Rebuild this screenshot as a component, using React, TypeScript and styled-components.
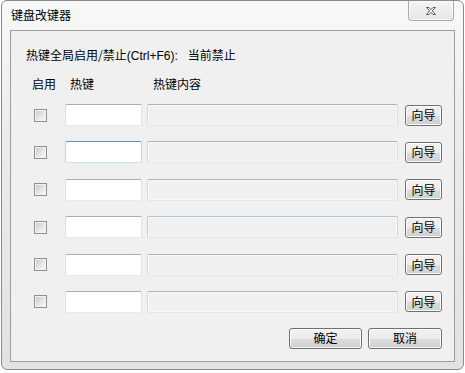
import React from "react";
import styled, { createGlobalStyle } from "styled-components";

const Global = createGlobalStyle`
  html, body { margin: 0; padding: 0; background: #ffffff; }
  body { font-family: "Liberation Sans", "Noto Sans CJK SC", sans-serif; font-size: 12px; color: #000; }
  * { box-sizing: border-box; }
`;

const Win = styled.div`
  margin: 0 0 0 1px;
  width: 463px;
  height: 370px;
  border: 1px solid #8a8a8a;
  border-radius: 6px;
  background: linear-gradient(to bottom, #f8f8f8 0%, #ebebeb 40%, #e2e2e2 100%);
  display: flex;
  flex-direction: column;
  overflow: hidden;
`;

const TitleBar = styled.div`
  height: 29px;
  display: flex;
  align-items: flex-start;
  padding-left: 9px;
`;

const Title = styled.div`
  font-family: "Noto Sans CJK SC", sans-serif;
  font-size: 12px;
  line-height: 16px;
  margin-top: 6px;
  color: #000;
`;

const CloseBtn = styled.div`
  margin-left: auto;
  margin-right: 9px;
  width: 46px;
  height: 20px;
  border: 1px solid #a9a9a9;
  border-top: none;
  border-radius: 0 0 4px 4px;
  background: linear-gradient(to bottom, #f4f4f4, #e6e6e6);
  box-shadow: inset 0 0 0 1px rgba(255,255,255,0.7);
  display: flex;
  align-items: center;
  justify-content: center;
  padding-top: 1px;
`;

const Client = styled.div`
  margin: 0 8px 0 8px;
  height: 332px;
  border: 1px solid #9c9c9c;
  background: #f0f0f0;
  display: flex;
  flex-direction: column;
  padding: 15px 12px 0 0;
`;

const Status = styled.div`
  font-family: "Noto Sans CJK SC", sans-serif;
  line-height: 18px;
  padding-left: 15px;
  display: flex;
`;

const StatusValue = styled.span`
  margin-left: 10px;
`;

const Latin = styled.span`
  font-family: "Liberation Sans", sans-serif;
`;

const Header = styled.div`
  display: flex;
  font-family: "Noto Sans CJK SC", sans-serif;
  line-height: 18px;
  margin-top: 10px;
  padding-left: 21px;
`;

const HeadCell = styled.span<{ $w: number }>`
  width: ${(p) => p.$w}px;
`;

const Rows = styled.div`
  display: flex;
  flex-direction: column;
  gap: 15.4px;
  margin-top: 11px;
`;

const Row = styled.div`
  display: flex;
  align-items: center;
  height: 22px;
  padding-left: 23px;
`;

const Check = styled.input`
  appearance: none;
  margin: 0 18px 0 0;
  width: 13px;
  height: 13px;
  border: 1px solid #8e8f8f;
  background: linear-gradient(135deg, #c2c6cc 0%, #e4e6e9 55%, #fbfbfb 100%);
  box-shadow: inset 0 0 0 1px #f3f3f3;
`;

const KeyBox = styled.input<{ $active?: boolean }>`
  width: 77px;
  height: 22px;
  margin: 0 5px 0 0;
  padding: 0 3px;
  background: #ffffff;
  border: 1px solid;
  border-radius: 2px;
  border-color: ${(p) =>
    p.$active ? "#5794bf #b7d9ed #c7e2f1 #b7d9ed" : "#abadb3 #e2e3ea #e3e9ef #dbdfe6"};
  outline: none;
  font: inherit;
`;

const ContentBox = styled.input<{ $active?: boolean }>`
  width: 251px;
  height: 22px;
  margin: 0 7px 0 0;
  padding: 0 3px;
  background: #f0f0f0;
  border: 1px solid;
  border-radius: 2px;
  border-color: ${(p) =>
    p.$active ? "#a9c6dd #c5dced #d3e5f1 #b9d4e8" : "#afb1b6 #dcdde2 #e2e6ea #d9dce2"};
  box-shadow: inset 0 0 0 1px #f7f7f7;
  outline: none;
  font: inherit;
`;

const Btn = styled.button<{ $w: number; $h: number }>`
  width: ${(p) => p.$w}px;
  height: ${(p) => p.$h}px;
  padding: 0;
  margin: 0;
  border: 1px solid #707070;
  border-radius: 3px;
  background: linear-gradient(to bottom, #f2f2f2 0%, #ebebeb 50%, #dddddd 51%, #cfcfcf 100%);
  box-shadow: inset 0 0 0 1px #fbfbfb;
  font-family: "Noto Sans CJK SC", sans-serif;
  font-size: 12px;
  line-height: 16px;
  color: #000;
  display: flex;
  align-items: center;
  justify-content: center;
`;

const Footer = styled.div`
  display: flex;
  justify-content: flex-end;
  gap: 6px;
  margin-top: 15px;
`;

const rows = [
  { keyActive: false, contentActive: false },
  { keyActive: true, contentActive: false },
  { keyActive: false, contentActive: false },
  { keyActive: false, contentActive: true },
  { keyActive: false, contentActive: false },
  { keyActive: false, contentActive: false },
];

export default function App() {
  return (
    <>
      <Global />
      <Win>
        <TitleBar>
          <Title>键盘改键器</Title>
          <CloseBtn>
            <svg width="12" height="10" viewBox="0 0 12 10">
              <path
                d="M1.5 1.5 H4 L6 3.6 L8 1.5 H10.5 L7.3 5 L10.5 8.5 H8 L6 6.4 L4 8.5 H1.5 L4.7 5 Z"
                fill="#ffffff"
                stroke="#5a5a5a"
                strokeWidth="1"
                strokeLinejoin="round"
              />
            </svg>
          </CloseBtn>
        </TitleBar>
        <Client>
          <Status>
            <span>
              热键全局启用/禁止<Latin>(Ctrl+F6):</Latin>
            </span>
            <StatusValue>当前禁止</StatusValue>
          </Status>
          <Header>
            <HeadCell $w={38}>启用</HeadCell>
            <HeadCell $w={83}>热键</HeadCell>
            <HeadCell $w={60}>热键内容</HeadCell>
          </Header>
          <Rows>
            {rows.map((r, i) => (
              <Row key={i}>
                <Check type="checkbox" readOnly />
                <KeyBox $active={r.keyActive} readOnly />
                <ContentBox $active={r.contentActive} readOnly />
                <Btn $w={37} $h={21}>向导</Btn>
              </Row>
            ))}
          </Rows>
          <Footer>
            <Btn $w={73} $h={21}>确定</Btn>
            <Btn $w={74} $h={21}>取消</Btn>
          </Footer>
        </Client>
      </Win>
    </>
  );
}
